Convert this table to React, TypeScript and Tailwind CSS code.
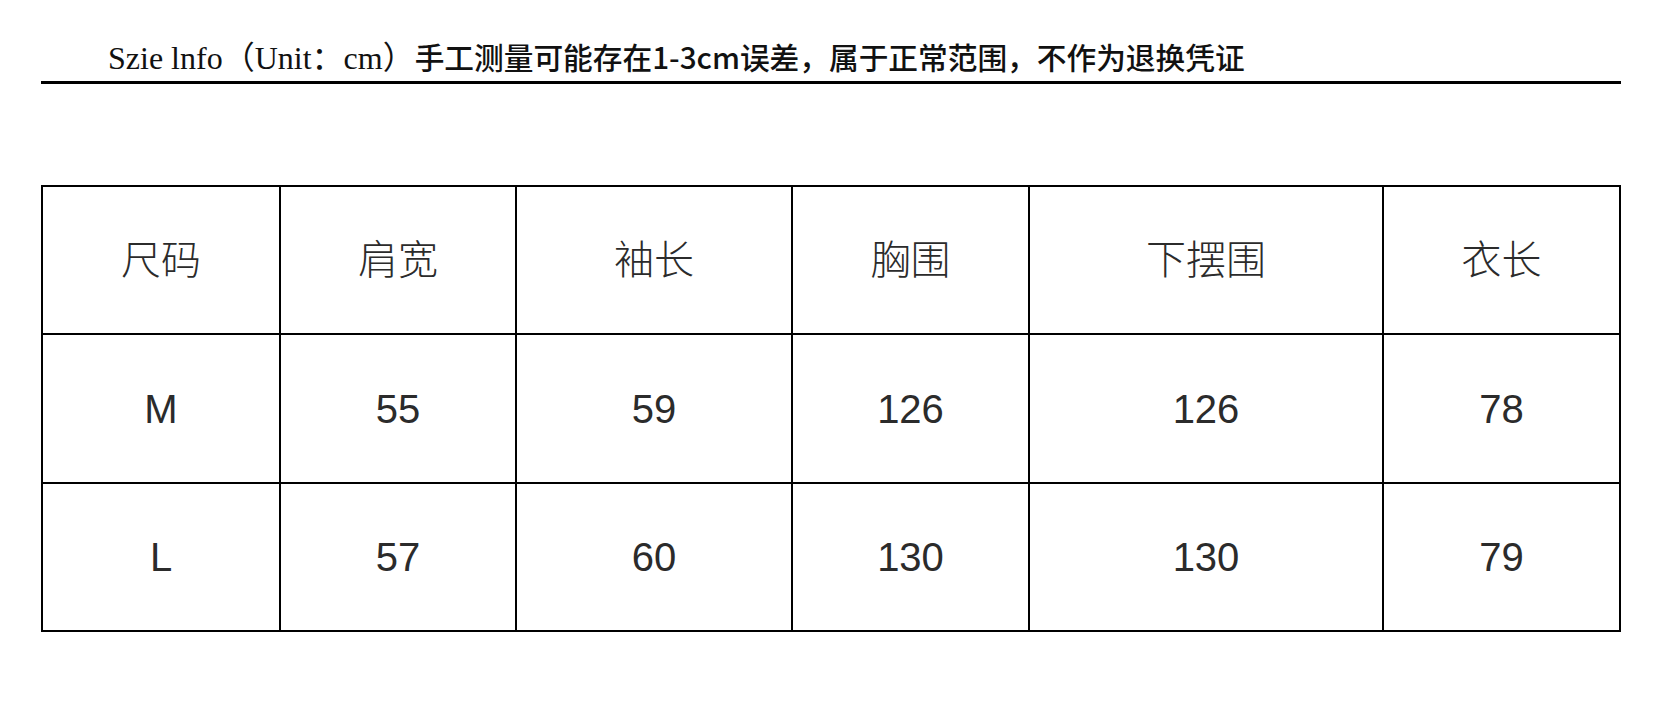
const columns = ["尺码", "肩宽", "袖长", "胸围", "下摆围", "衣长"];

const rows = [
  ["M", "55", "59", "126", "126", "78"],
  ["L", "57", "60", "130", "130", "79"],
];

const colWidths = ["w-[238px]", "w-[236px]", "w-[276px]", "w-[237px]", "w-[354px]", "w-[237px]"];
const rowHeights = ["h-[148px]", "h-[149px]", "h-[148px]"];

function Cell({ text, width, height }: { text: string; width: string; height: string }) {
  return (
    <div className={`${width} ${height} flex items-center justify-center border-r-2 border-b-2 border-black`}>
      <span className="text-[40px] leading-none font-light text-[#2b2b2b]">{text}</span>
    </div>
  );
}

export default function App() {
  const all = [columns, ...rows];
  return (
    <div className="w-[1660px] h-[704px] bg-white pt-[42px] pl-[41px]">
      <div className="w-[1580px]">
        <div className="h-[42px] pl-[67px] border-b-[3px] border-black text-[#111] leading-[30px] whitespace-nowrap">
          <span className="text-[32px] font-['Liberation_Serif','Noto_Sans_CJK_SC',serif]">
            Szie lnfo（Unit：cm）
          </span>
          <span className="text-[29.7px] font-medium font-['Noto_Sans_CJK_SC',sans-serif]">
            手工测量可能存在1-3cm误差，属于正常范围，不作为退换凭证
          </span>
        </div>

        <div className="mt-[101px] border-t-2 border-l-2 border-black w-fit font-['Liberation_Sans','Noto_Sans_CJK_SC',sans-serif]">
          {all.map((row, ri) => (
            <div key={ri} className="flex">
              {row.map((text, ci) => (
                <Cell key={ci} text={text} width={colWidths[ci]} height={rowHeights[ri]} />
              ))}
            </div>
          ))}
        </div>
      </div>
    </div>
  );
}
